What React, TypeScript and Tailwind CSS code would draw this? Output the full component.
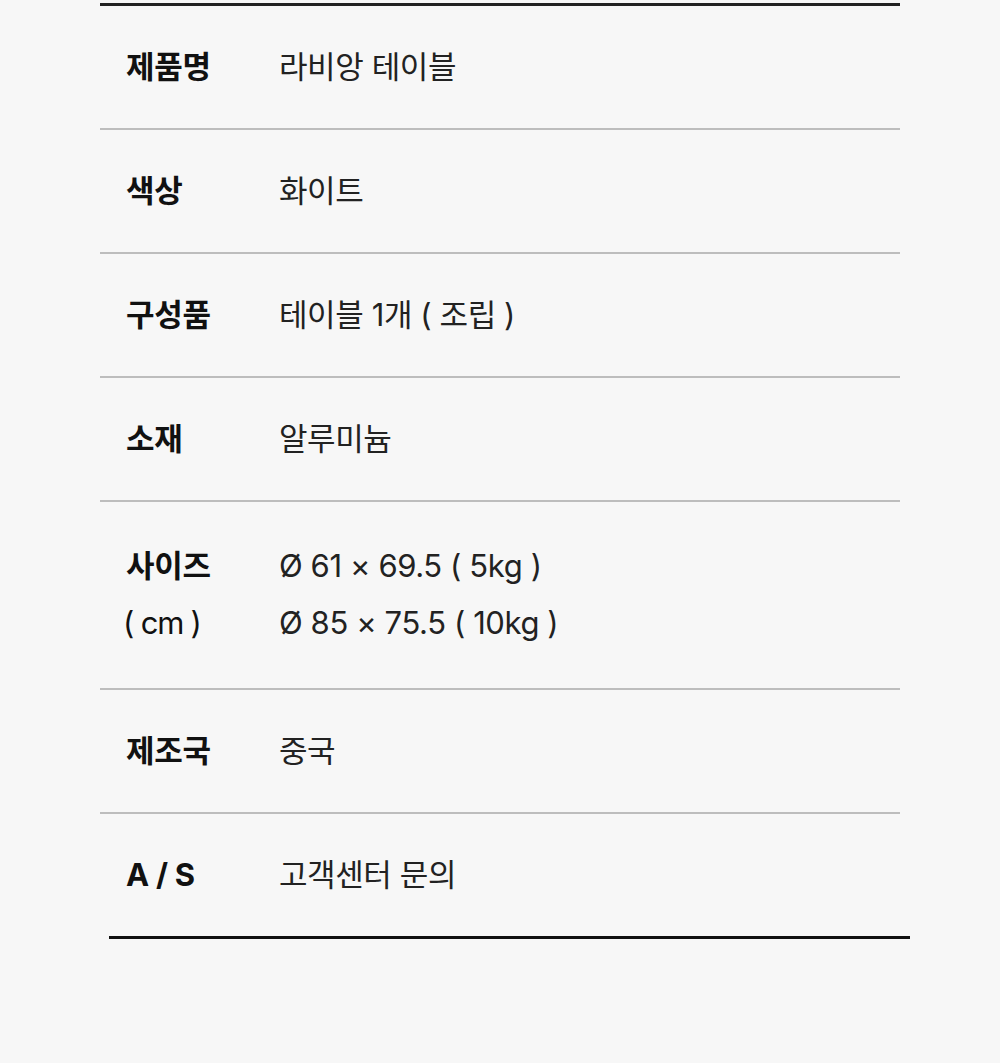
const specs: { label: string[]; value: string[] }[] = [
  { label: ['제품명'], value: ['라비앙 테이블'] },
  { label: ['색상'], value: ['화이트'] },
  { label: ['구성품'], value: ['테이블 1개 ( 조립 )'] },
  { label: ['소재'], value: ['알루미늄'] },
  { label: ['사이즈', '( cm )'], value: ['Ø 61 × 69.5 ( 5kg )', 'Ø 85 × 75.5 ( 10kg )'] },
  { label: ['제조국'], value: ['중국'] },
  { label: ['A / S'], value: ['고객센터 문의'] },
];

export default function App() {
  return (
    <div
      className="min-h-[1063px] w-[1000px] bg-[#f7f7f7] pt-[3px] tracking-[-0.3px] text-[31px]"
      style={{ fontFamily: 'Inter, "Noto Sans CJK KR", sans-serif' }}
    >
      <div className="ml-[100px] w-[800px] border-t-[3px] border-[#222]">
        {specs.map((row, i) => {
          const multi = row.value.length > 1;
          return (
            <div
              key={i}
              className={
                'flex ' +
                (i < specs.length - 1 ? 'border-b-2 border-[#bdbdbd] ' : '') +
                (multi ? 'pt-[35px] pb-[37px] leading-[57px]' : 'py-[31px] leading-[60px]')
              }
            >
              <div className="w-[179px] shrink-0 pl-[26px] text-[#111]">
                {row.label.map((l, j) => (
                  <div
                    key={j}
                    className={j === 0 ? 'font-bold' : '-ml-[3px] font-normal tracking-[-1.2px]'}
                  >
                    {l}
                  </div>
                ))}
              </div>
              <div className="tracking-[-0.4px] text-[#222]">
                {row.value.map((v, j) => (
                  <div key={j}>{v}</div>
                ))}
              </div>
            </div>
          );
        })}
      </div>
      <div className="ml-[109px] h-[3px] w-[801px] bg-[#111]" />
    </div>
  );
}
